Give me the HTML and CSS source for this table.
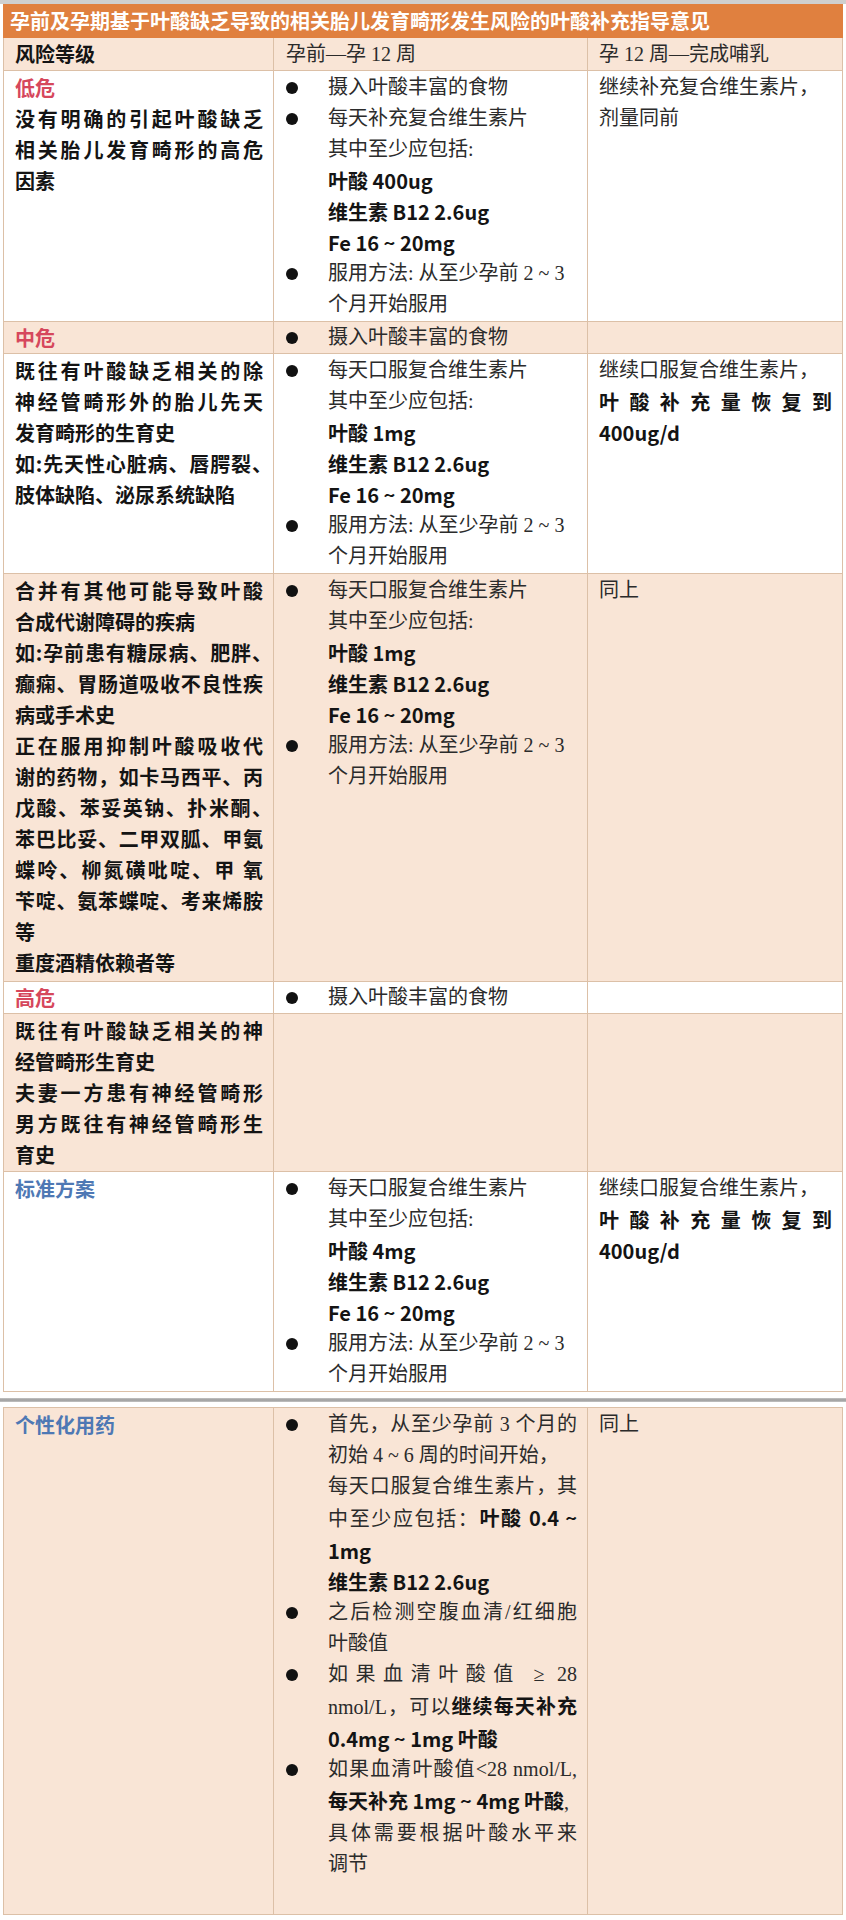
FILE: index.html
```html
<!DOCTYPE html>
<html lang="zh-CN">
<head>
<meta charset="utf-8">
<title>叶酸补充指导意见</title>
<link rel="stylesheet" href="styles.css">
</head>
<body>
<div class="topbar"></div>
<table class="sheet">
  <colgroup><col class="w1"><col class="w2"><col class="w3"></colgroup>
  <tr class="title"><td colspan="3">孕前及孕期基于叶酸缺乏导致的相关胎儿发育畸形发生风险的叶酸补充指导意见</td></tr>
  <tr class="head peach">
    <td class="b">风险等级</td>
    <td>孕前—孕 12 周</td>
    <td>孕 12 周—完成哺乳</td>
  </tr>

  <tr>
    <td>
      <span class="l lab red">低危</span>
      <span class="j b">没有明确的引起叶酸缺乏</span>
      <span class="j b">相关胎儿发育畸形的高危</span>
      <span class="l b">因素</span>
    </td>
    <td class="plan">
      <div class="item"><i class="dot"></i><div><span class="l">摄入叶酸丰富的食物</span></div></div>
      <div class="item"><i class="dot"></i><div>
        <span class="l">每天补充复合维生素片</span>
        <span class="l">其中至少应包括:</span>
        <span class="l b">叶酸 400ug</span>
        <span class="l b">维生素 B12 2.6ug</span>
        <span class="l b">Fe 16 ~ 20mg</span>
      </div></div>
      <div class="item"><i class="dot"></i><div>
        <span class="l">服用方法: 从至少孕前 2 ~ 3</span>
        <span class="l">个月开始服用</span>
      </div></div>
    </td>
    <td class="after">
      <span class="l">继续补充复合维生素片，</span>
      <span class="l">剂量同前</span>
    </td>
  </tr>

  <tr class="peach short">
    <td><span class="l lab red">中危</span></td>
    <td class="plan"><div class="item"><i class="dot"></i><div><span class="l">摄入叶酸丰富的食物</span></div></div></td>
    <td></td>
  </tr>

  <tr>
    <td>
      <span class="j b">既往有叶酸缺乏相关的除</span>
      <span class="j b">神经管畸形外的胎儿先天</span>
      <span class="l b">发育畸形的生育史</span>
      <span class="j b pe">如:先天性心脏病、唇腭裂、</span>
      <span class="l b">肢体缺陷、泌尿系统缺陷</span>
    </td>
    <td class="plan">
      <div class="item"><i class="dot"></i><div>
        <span class="l">每天口服复合维生素片</span>
        <span class="l">其中至少应包括:</span>
        <span class="l b">叶酸 1mg</span>
        <span class="l b">维生素 B12 2.6ug</span>
        <span class="l b">Fe 16 ~ 20mg</span>
      </div></div>
      <div class="item"><i class="dot"></i><div>
        <span class="l">服用方法: 从至少孕前 2 ~ 3</span>
        <span class="l">个月开始服用</span>
      </div></div>
    </td>
    <td class="after">
      <span class="l">继续口服复合维生素片，</span>
      <span class="j b">叶酸补充量恢复到</span>
      <span class="l b">400ug/d</span>
    </td>
  </tr>

  <tr class="peach tall">
    <td>
      <span class="j b">合并有其他可能导致叶酸</span>
      <span class="l b">合成代谢障碍的疾病</span>
      <span class="j b pe">如:孕前患有糖尿病、肥胖、</span>
      <span class="j b">癫痫、胃肠道吸收不良性疾</span>
      <span class="l b">病或手术史</span>
      <span class="j b">正在服用抑制叶酸吸收代</span>
      <span class="j b">谢的药物，如卡马西平、丙</span>
      <span class="j b pe">戊酸、苯妥英钠、扑米酮、</span>
      <span class="j b">苯巴比妥、二甲双胍、甲氨</span>
      <span class="j b">蝶呤、柳氮磺吡啶、甲 氧</span>
      <span class="j b">苄啶、氨苯蝶啶、考来烯胺</span>
      <span class="l b">等</span>
      <span class="l b">重度酒精依赖者等</span>
    </td>
    <td class="plan">
      <div class="item"><i class="dot"></i><div>
        <span class="l">每天口服复合维生素片</span>
        <span class="l">其中至少应包括:</span>
        <span class="l b">叶酸 1mg</span>
        <span class="l b">维生素 B12 2.6ug</span>
        <span class="l b">Fe 16 ~ 20mg</span>
      </div></div>
      <div class="item"><i class="dot"></i><div>
        <span class="l">服用方法: 从至少孕前 2 ~ 3</span>
        <span class="l">个月开始服用</span>
      </div></div>
    </td>
    <td class="after"><span class="l">同上</span></td>
  </tr>

  <tr class="short">
    <td><span class="l lab red">高危</span></td>
    <td class="plan"><div class="item"><i class="dot"></i><div><span class="l">摄入叶酸丰富的食物</span></div></div></td>
    <td></td>
  </tr>

  <tr class="peach">
    <td>
      <span class="j b">既往有叶酸缺乏相关的神</span>
      <span class="l b">经管畸形生育史</span>
      <span class="j b">夫妻一方患有神经管畸形</span>
      <span class="j b">男方既往有神经管畸形生</span>
      <span class="l b">育史</span>
    </td>
    <td></td>
    <td></td>
  </tr>

  <tr>
    <td><span class="l lab blue">标准方案</span></td>
    <td class="plan">
      <div class="item"><i class="dot"></i><div>
        <span class="l">每天口服复合维生素片</span>
        <span class="l">其中至少应包括:</span>
        <span class="l b">叶酸 4mg</span>
        <span class="l b">维生素 B12 2.6ug</span>
        <span class="l b">Fe 16 ~ 20mg</span>
      </div></div>
      <div class="item"><i class="dot"></i><div>
        <span class="l">服用方法: 从至少孕前 2 ~ 3</span>
        <span class="l">个月开始服用</span>
      </div></div>
    </td>
    <td class="after">
      <span class="l">继续口服复合维生素片，</span>
      <span class="j b">叶酸补充量恢复到</span>
      <span class="l b">400ug/d</span>
    </td>
  </tr>
</table>

<div class="pagebreak"><div class="rule"></div></div>

<table class="sheet">
  <colgroup><col class="w1"><col class="w2"><col class="w3"></colgroup>
  <tr class="peach last">
    <td><span class="l lab blue">个性化用药</span></td>
    <td class="plan">
      <div class="item"><i class="dot"></i><div>
        <span class="j">首先，从至少孕前 3 个月的</span>
        <span class="l">初始 4 ~ 6 周的时间开始，</span>
        <span class="j">每天口服复合维生素片，其</span>
        <span class="j">中至少应包括：<b class="b">叶酸 0.4 ~</b></span>
        <span class="l b">1mg</span>
        <span class="l b">维生素 B12 2.6ug</span>
      </div></div>
      <div class="item"><i class="dot"></i><div>
        <span class="j">之后检测空腹血清/红细胞</span>
        <span class="l">叶酸值</span>
      </div></div>
      <div class="item"><i class="dot"></i><div>
        <span class="j">如果血清叶酸值 ≥ 28</span>
        <span class="j">nmol/L，可以<b class="b">继续每天补充</b></span>
        <span class="l b">0.4mg ~ 1mg 叶酸</span>
      </div></div>
      <div class="item"><i class="dot"></i><div>
        <span class="j">如果血清叶酸值&lt;28 nmol/L,</span>
        <span class="l"><b class="b">每天补充 1mg ~ 4mg 叶酸</b>,</span>
        <span class="j">具体需要根据叶酸水平来</span>
        <span class="l">调节</span>
      </div></div>
    </td>
    <td class="after"><span class="l">同上</span></td>
  </tr>
</table>
</body>
</html>
```
FILE: styles.css
```css
* {
  box-sizing: border-box;
}

body {
  margin: 0;
  background: #ffffff;
  font-family: "Liberation Serif", "Noto Sans CJK SC", serif;
  color: #2b2b2b;
  text-spacing-trim: space-all;
}

.topbar {
  height: 4px;
  background: #cfcfcf;
}

.sheet {
  width: 839px;
  margin-left: 3px;
  border-collapse: collapse;
  table-layout: fixed;
  font-size: 20px;
  line-height: 31px;
}

.w1 { width: 270px; }
.w2 { width: 314px; }
.w3 { width: 255px; }

.sheet td {
  border: 1px solid #dcc0a7;
  padding: 1px 10px 1px 11px;
  vertical-align: top;
  background: #ffffff;
}

.sheet tr.peach td {
  background: #f9e5d6;
}

.sheet tr.short td {
  padding-top: 0;
  padding-bottom: 0;
}

.sheet tr.tall td {
  padding-bottom: 3px;
}

.sheet tr.last td {
  padding-bottom: 34px;
}

.sheet tr.title td {
  background: #e0803f;
  border-color: #e0803f;
  color: #ffffff;
  font-family: "Noto Sans CJK SC", sans-serif;
  font-weight: 700;
  font-size: 20px;
  line-height: 32px;
  padding: 0 6px;
}

.sheet tr.head td {
  line-height: 32px;
  padding-top: 0;
  padding-bottom: 0;
}

.sheet tr.head td:nth-child(2) {
  padding-left: 12px;
}

.l {
  display: block;
  white-space: nowrap;
}

.j {
  display: block;
  white-space: nowrap;
  text-align: justify;
  text-align-last: justify;
}

.pe {
  margin-right: -9px;
}

.b {
  font-family: "Noto Sans CJK SC", sans-serif;
  font-weight: 700;
  color: #141414;
}

.lab {
  font-family: "Noto Sans CJK SC", sans-serif;
  font-weight: 700;
}

.red {
  color: #d6475c;
}

.blue {
  color: #4e78b4;
}

.item {
  display: grid;
  grid-template-columns: 43px 1fr;
}

.dot {
  display: block;
  width: 12px;
  height: 12px;
  border-radius: 50%;
  background: #111111;
  margin: 10px 0 0 1px;
}

.after {
  padding-right: 9px;
}

.pagebreak {
  height: 15px;
  display: flex;
  flex-direction: column;
  justify-content: center;
}

.pagebreak .rule {
  height: 4px;
  background: linear-gradient(#c4c4c4, #9d9d9d 50%, #c4c4c4);
}
```
